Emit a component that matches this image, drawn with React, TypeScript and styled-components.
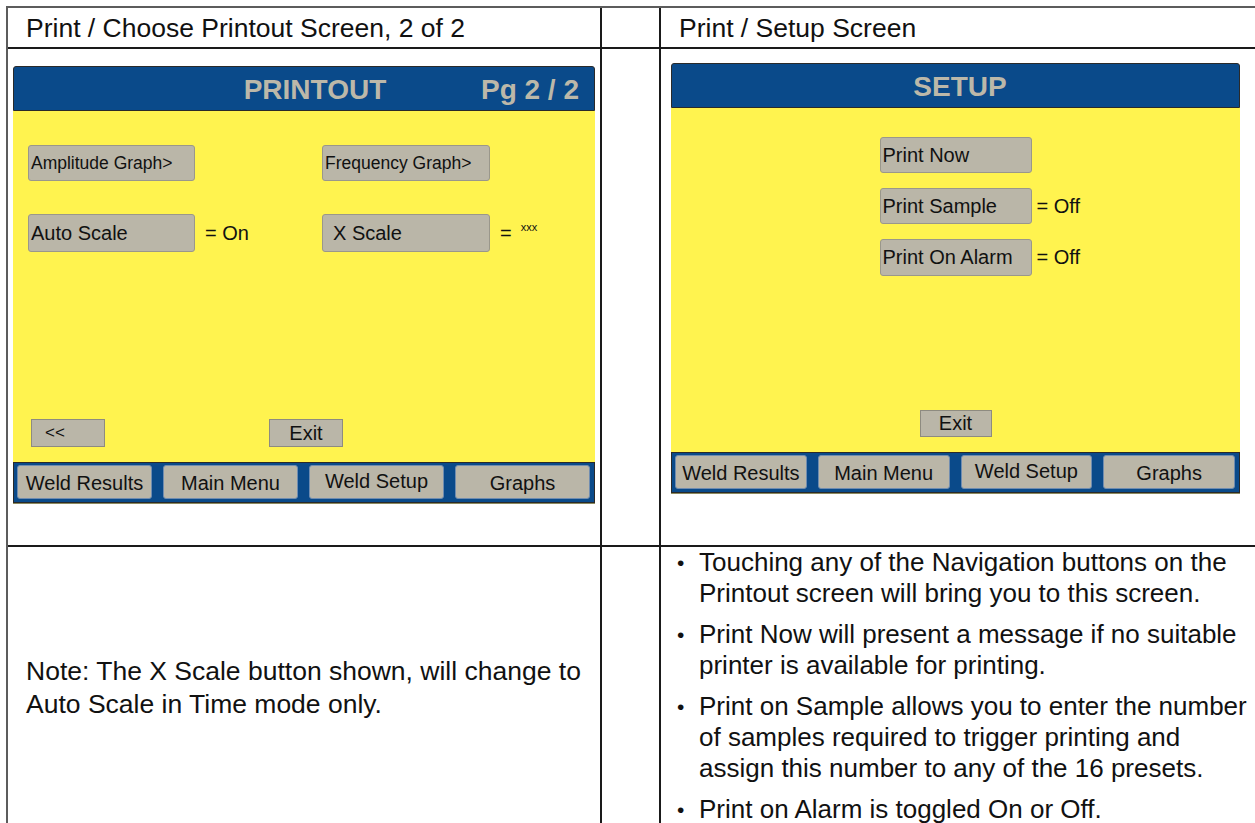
import React from 'react';
import styled, { createGlobalStyle } from 'styled-components';

const GlobalStyle = createGlobalStyle`
  html, body {
    margin: 0;
    padding: 0;
    background: #ffffff;
    overflow: hidden;
  }
  body {
    font-family: 'Liberation Sans', Arial, sans-serif;
    color: #111;
  }
`;

const BLUE = '#0a4a8a';
const YELLOW = '#fff34f';
const KEY_GREY = '#bab6a8';

const Page = styled.div`
  width: 1255px;
  height: 823px;
  overflow: hidden;
  box-sizing: border-box;
  padding: 6px 0 0 6px;
`;

const Table = styled.div`
  display: grid;
  grid-template-columns: 594px 59px 640px;
  grid-template-rows: 41px 498px 285px;
  width: max-content;
  border-left: 2px solid #5c5c5c;
  border-top: 2px solid #5c5c5c;
  font-size: 26.5px;
`;

const Cell = styled.div`
  box-sizing: border-box;
  border-right: 2px solid #1a1a1a;
  border-bottom: 2px solid #1a1a1a;
  min-width: 0;
`;

const HeadCell = styled(Cell)`
  display: flex;
  align-items: center;
  padding: 1px 0 0 18px;
  white-space: nowrap;
`;

const ScreenCell = styled(Cell)<{ $top: number; $left: number }>`
  padding: ${(p) => p.$top}px 0 0 ${(p) => p.$left}px;
`;

const NoteCell = styled(Cell)`
  display: flex;
  align-items: center;
  padding: 0 0 2px 18px;
  line-height: 33px;
  white-space: nowrap;
`;

const ListCell = styled(Cell)`
  padding: 0 0 0 15px;
`;

/* ---- touch screen mock ---- */

const Screen = styled.div<{ $w: number; $h: number }>`
  width: ${(p) => p.$w}px;
  height: ${(p) => p.$h}px;
  display: flex;
  flex-direction: column;
`;

const TitleBar = styled.div<{ $shift: number }>`
  height: 45px;
  box-sizing: border-box;
  flex-shrink: 0;
  background: ${BLUE};
  border: 1px solid #2a2a2a;
  border-radius: 3px 3px 0 0;
  display: grid;
  grid-template-columns: 1fr auto 1fr;
  align-items: center;
  padding: 2px 15px 0 ${(p) => 15 + p.$shift}px;
  color: #bcb8a9;
  font-weight: bold;
  font-size: 28px;
`;

const Title = styled.div`
  grid-column: 2;
`;

const PageNo = styled.div`
  grid-column: 3;
  justify-self: end;
`;

const Body = styled.div<{ $top: number }>`
  flex: 1;
  background: ${YELLOW};
  display: flex;
  flex-direction: column;
  padding: ${(p) => p.$top}px 0 15px;
`;

const OptionRow = styled.div<{ $h: number }>`
  display: flex;
  height: ${(p) => p.$h}px;
  padding-left: 15px;

  & + & {
    margin-top: 33px;
  }
`;

const OptionCell = styled.div`
  flex: 0 0 294px;
  height: 100%;
  display: flex;
  align-items: center;
`;

const Key = styled.button<{ $w: number; $size: number; $pad: number }>`
  margin: 0;
  flex-shrink: 0;
  width: ${(p) => p.$w}px;
  height: 100%;
  box-sizing: border-box;
  background: ${KEY_GREY};
  border: 1px solid #9a978b;
  border-radius: 3px;
  font-family: 'Liberation Sans', Arial, sans-serif;
  font-size: ${(p) => p.$size}px;
  color: #111;
  text-align: left;
  padding: 0 0 0 ${(p) => p.$pad}px;
  white-space: nowrap;
`;

const Value = styled.span<{ $gap: number }>`
  margin-left: ${(p) => p.$gap}px;
  font-size: 20px;
  white-space: nowrap;
`;

const Sup = styled.sup`
  font-size: 11px;
  margin-left: 9px;
  vertical-align: 9px;
`;

const FootRow = styled.div`
  margin-top: auto;
  height: 28px;
  display: flex;
  padding-left: 18px;
`;

const SmallKey = styled.button<{ $w: number; $gap?: number; $center?: boolean; $size: number }>`
  margin: 0 0 0 ${(p) => p.$gap ?? 0}px;
  width: ${(p) => p.$w}px;
  height: 100%;
  box-sizing: border-box;
  background: ${KEY_GREY};
  border: 1px solid #8e8b80;
  border-radius: 0;
  font-family: 'Liberation Sans', Arial, sans-serif;
  font-size: ${(p) => p.$size}px;
  color: #111;
  text-align: ${(p) => (p.$center ? 'center' : 'left')};
  padding: ${(p) => (p.$center ? '0' : '0 0 0 13px')};
`;

const SetupRow = styled.div<{ $h: number }>`
  display: grid;
  grid-template-columns: 1fr 152px 1fr;
  height: ${(p) => p.$h}px;
  align-items: center;

  & + & {
    margin-top: 15px;
  }
`;

const SetupKey = styled(Key)`
  grid-column: 2;
  width: 100%;
`;

const ExitKey = styled(SmallKey)`
  margin-top: auto;
  align-self: center;
  height: 27px;
  padding-bottom: 1px;
`;

const NavBar = styled.div`
  height: 41px;
  flex-shrink: 0;
  box-sizing: border-box;
  background: ${BLUE};
  border: 1px solid #2a2a2a;
  box-shadow: 0 1px 0 #8c8a5e;
  display: grid;
  grid-template-columns: repeat(4, 1fr);
  gap: 11px;
  padding: 2px 4px 3px 3px;
`;

const NavKey = styled.button<{ $lift?: boolean }>`
  margin: 0;
  min-width: 0;
  box-sizing: border-box;
  background: ${KEY_GREY};
  border: 1px solid #6f8cb0;
  border-radius: 3px;
  font-family: 'Liberation Sans', Arial, sans-serif;
  font-size: 20px;
  color: #111;
  white-space: nowrap;
  padding: ${(p) => (p.$lift ? '0 0 2px' : '3px 0 0')};
`;

/* ---- notes ---- */

const Bullets = styled.ul`
  list-style: none;
  margin: 0;
  padding: 0;
  font-size: 26px;
  line-height: 31px;
`;

const Bullet = styled.li`
  display: flex;
  white-space: nowrap;

  & + & {
    margin-top: 10px;
  }
`;

const Dot = styled.span`
  width: 23px;
  flex-shrink: 0;
  font-size: 21px;
  padding-left: 1px;
  box-sizing: border-box;
`;

const navItems = [
  { label: 'Weld Results' },
  { label: 'Main Menu' },
  { label: 'Weld Setup', lift: true },
  { label: 'Graphs' },
];

const Nav: React.FC = () => (
  <NavBar>
    {navItems.map((n) => (
      <NavKey key={n.label} $lift={n.lift}>
        {n.label}
      </NavKey>
    ))}
  </NavBar>
);

const setupItems = [
  { label: 'Print Now', h: 36 },
  { label: 'Print Sample', value: '= Off', h: 36 },
  { label: 'Print On Alarm', value: '= Off', h: 37 },
];

const notes = [
  ['Touching any of the Navigation buttons on the', 'Printout screen will bring you to this screen.'],
  ['Print Now will present a message if no suitable', 'printer is available for printing.'],
  [
    'Print on Sample allows you to enter the number',
    'of samples required to trigger printing and',
    'assign this number to any of the 16 presets.',
  ],
  ['Print on Alarm is toggled On or Off.'],
];

export default function App() {
  return (
    <Page>
      <GlobalStyle />
      <Table>
        <HeadCell>Print / Choose Printout Screen, 2 of 2</HeadCell>
        <Cell />
        <HeadCell>Print / Setup Screen</HeadCell>

        <ScreenCell $top={17} $left={5}>
          <Screen $w={582} $h={437}>
            <TitleBar $shift={22}>
              <Title>PRINTOUT</Title>
              <PageNo>Pg 2 / 2</PageNo>
            </TitleBar>
            <Body $top={34}>
              <OptionRow $h={36}>
                <OptionCell>
                  <Key $w={167} $size={17.5} $pad={2}>Amplitude Graph&gt;</Key>
                </OptionCell>
                <OptionCell>
                  <Key $w={168} $size={17.5} $pad={2}>Frequency Graph&gt;</Key>
                </OptionCell>
              </OptionRow>
              <OptionRow $h={38}>
                <OptionCell>
                  <Key $w={167} $size={20} $pad={2}>Auto Scale</Key>
                  <Value $gap={10}>= On</Value>
                </OptionCell>
                <OptionCell>
                  <Key $w={168} $size={20} $pad={10}>X Scale</Key>
                  <Value $gap={10}>
                    =<Sup>xxx</Sup>
                  </Value>
                </OptionCell>
              </OptionRow>
              <FootRow>
                <SmallKey $w={74} $size={17}>&lt;&lt;</SmallKey>
                <SmallKey $w={74} $gap={164} $center $size={20}>
                  Exit
                </SmallKey>
              </FootRow>
            </Body>
            <Nav />
          </Screen>
        </ScreenCell>
        <Cell />
        <ScreenCell $top={14} $left={10}>
          <Screen $w={569} $h={430}>
            <TitleBar $shift={9}>
              <Title>SETUP</Title>
            </TitleBar>
            <Body $top={29}>
              {setupItems.map((s) => (
                <SetupRow key={s.label} $h={s.h}>
                  <SetupKey $w={152} $size={20} $pad={2}>
                    {s.label}
                  </SetupKey>
                  {s.value && <Value $gap={5}>{s.value}</Value>}
                </SetupRow>
              ))}
              <ExitKey $w={72} $center $size={20}>
                Exit
              </ExitKey>
            </Body>
            <Nav />
          </Screen>
        </ScreenCell>

        <NoteCell>
          <div>
            Note: The X Scale button shown, will change to
            <br />
            Auto Scale in Time mode only.
          </div>
        </NoteCell>
        <Cell />
        <ListCell>
          <Bullets>
            {notes.map((lines, i) => (
              <Bullet key={i}>
                <Dot>•</Dot>
                <div>
                  {lines.map((l, j) => (
                    <React.Fragment key={j}>
                      {j > 0 && <br />}
                      {l}
                    </React.Fragment>
                  ))}
                </div>
              </Bullet>
            ))}
          </Bullets>
        </ListCell>
      </Table>
    </Page>
  );
}
